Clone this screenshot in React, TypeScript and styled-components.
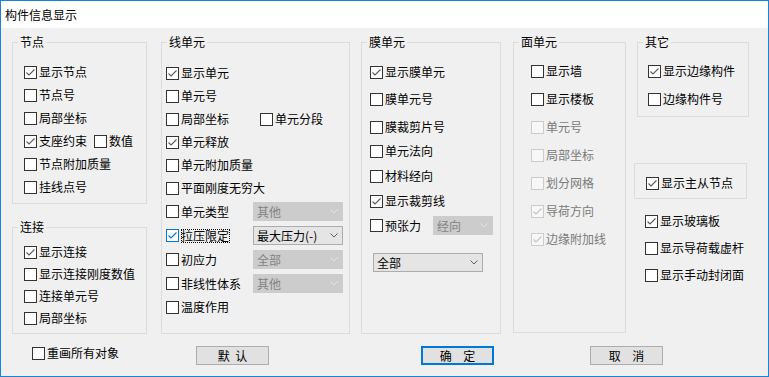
import React from 'react'
import styled, { createGlobalStyle, css } from 'styled-components'

const GlobalStyle = createGlobalStyle`
  html, body {
    margin: 0;
    padding: 0;
    background: #f0f0f0;
  }
  body {
    font-family: 'Noto Sans CJK SC', 'Noto Sans', sans-serif;
    font-size: 12px;
    color: #000;
  }
`

type Tone = 'normal' | 'focus' | 'disabled'

const Window = styled.div`
  box-sizing: border-box;
  width: 769px;
  height: 377px;
  border: 1px solid #1883d7;
  background: #f0f0f0;
  display: flex;
  flex-direction: column;
  overflow: hidden;
`

const TitleBar = styled.div`
  height: 27px;
  flex: none;
  background: #fff;
  display: flex;
  align-items: center;
  padding-left: 4px;
  font-size: 12px;
`

const Body = styled.div`
  display: grid;
  grid-template-columns: 149px 200px 152px 121px 116px;
  grid-template-rows: 292px 19px;
  row-gap: 12px;
  padding: 14px 0 0 11px;
`

const Stack = styled.div<{ $gap?: number }>`
  display: flex;
  flex-direction: column;
  gap: ${(p) => p.$gap ?? 0}px;
`

const Group = styled.div<{ $w: number; $h: number; $pt: number; $pl: number; $gap: number; $ml?: number }>`
  position: relative;
  box-sizing: border-box;
  width: ${(p) => p.$w}px;
  height: ${(p) => p.$h}px;
  margin-left: ${(p) => p.$ml ?? 0}px;
  border: 1px solid #dcdcdc;
  padding: ${(p) => p.$pt}px 0 0 ${(p) => p.$pl}px;
  display: flex;
  flex-direction: column;
  gap: ${(p) => p.$gap}px;
`

const Legend = styled.span`
  position: absolute;
  top: -8px;
  left: 5px;
  padding: 0 2px;
  background: #f0f0f0;
  line-height: 14px;
  white-space: nowrap;
`

const Frame = styled.div`
  box-sizing: border-box;
  width: 113px;
  height: 36px;
  margin-top: 46px;
  border: 1px solid #dcdcdc;
  padding: 11px 0 0 11px;
`

const LooseList = styled.div`
  display: flex;
  flex-direction: column;
  gap: 11px;
  margin-top: 14px;
  padding-left: 11px;
`

const Line = styled.div<{ $h?: number; $mt?: number }>`
  display: flex;
  align-items: center;
  height: ${(p) => p.$h ?? 16}px;
  margin-top: ${(p) => p.$mt ?? 0}px;
  white-space: nowrap;
`

const CheckLabel = styled.label<{ $w?: number }>`
  display: flex;
  align-items: center;
  flex: none;
  ${(p) =>
    p.$w &&
    css`
      width: ${p.$w}px;
    `}
`

const Box = styled.span<{ $tone: Tone }>`
  box-sizing: border-box;
  width: 13px;
  height: 13px;
  flex: none;
  display: flex;
  align-items: center;
  justify-content: center;
  border: 1px solid ${(p) => (p.$tone === 'focus' ? '#0078d7' : p.$tone === 'disabled' ? '#cccccc' : '#333333')};
  background: ${(p) => (p.$tone === 'disabled' ? '#f7f7f7' : '#fff')};
  color: ${(p) => (p.$tone === 'focus' ? '#0078d7' : p.$tone === 'disabled' ? '#c4c4c4' : '#5a5a5a')};
`

const Caption = styled.span<{ $tone: Tone }>`
  margin-left: 2px;
  padding: 0 1px 0 0;
  line-height: 14px;
  color: ${(p) => (p.$tone === 'disabled' ? '#7a7a7a' : '#000')};
  ${(p) =>
    p.$tone === 'focus' &&
    css`
      outline: 1px dotted #000;
      outline-offset: -1px;
    `}
`

const Combo = styled.div<{ $w: number; $disabled?: boolean; $ml?: number }>`
  box-sizing: border-box;
  width: ${(p) => p.$w}px;
  height: 19px;
  flex: none;
  margin-left: ${(p) => p.$ml ?? 0}px;
  padding: 0 4px 0 3px;
  display: flex;
  align-items: center;
  justify-content: space-between;
  border: 1px solid ${(p) => (p.$disabled ? '#cccccc' : '#adadad')};
  background: ${(p) => (p.$disabled ? '#cccccc' : '#e5e5e5')};
  color: ${(p) => (p.$disabled ? '#838383' : '#000')};
  line-height: 14px;
  white-space: nowrap;
`

const Chevron = styled.svg<{ $disabled?: boolean }>`
  flex: none;
  color: ${(p) => (p.$disabled ? '#e2e2e2' : '#606060')};
`

const BottomCell = styled.div<{ $ml: number; $span?: number }>`
  margin-left: ${(p) => p.$ml}px;
  grid-column: span ${(p) => p.$span ?? 1};
  display: flex;
  align-items: flex-start;
`

const Button = styled.button<{ $primary?: boolean; $spacing: number }>`
  box-sizing: border-box;
  width: 73px;
  height: 19px;
  padding: 0;
  margin: 0;
  font-family: inherit;
  font-size: 12px;
  line-height: 14px;
  color: #000;
  background: #e1e1e1;
  border: ${(p) => (p.$primary ? '2px solid #0078d7' : '1px solid #adadad')};
  word-spacing: ${(p) => p.$spacing}px;
  white-space: pre;
`

function Check({
  label,
  checked,
  tone = 'normal',
  width,
}: {
  label: string
  checked?: boolean
  tone?: Tone
  width?: number
}) {
  return (
    <CheckLabel $w={width}>
      <Box $tone={tone}>
        {checked && (
          <svg width='11' height='11' viewBox='0 0 11 11'>
            <path d='M1.5 5.5 L4 8 L9.5 2.5' fill='none' stroke='currentColor' strokeWidth='1.1' />
          </svg>
        )}
      </Box>
      <Caption $tone={tone}>{label}</Caption>
    </CheckLabel>
  )
}

function Select({ value, width, disabled, ml }: { value: string; width: number; disabled?: boolean; ml?: number }) {
  return (
    <Combo $w={width} $disabled={disabled} $ml={ml}>
      <span>{value}</span>
      <Chevron $disabled={disabled} width='8' height='5' viewBox='0 0 8 5'>
        <polyline points='0.5,0.5 4,4 7.5,0.5' fill='none' stroke='currentColor' strokeWidth='1' />
      </Chevron>
    </Combo>
  )
}

export default function App() {
  return (
    <>
      <GlobalStyle />
      <Window>
        <TitleBar>构件信息显示</TitleBar>
        <Body>
          <Stack $gap={23}>
            <Group $w={135} $h={162} $pt={21} $pl={11} $gap={7}>
              <Legend>节点</Legend>
              <Line><Check label='显示节点' checked /></Line>
              <Line><Check label='节点号' /></Line>
              <Line><Check label='局部坐标' /></Line>
              <Line>
                <Check label='支座约束' checked width={70} />
                <Check label='数值' />
              </Line>
              <Line><Check label='节点附加质量' /></Line>
              <Line><Check label='挂线点号' /></Line>
            </Group>
            <Group $w={135} $h={107} $pt={16} $pl={11} $gap={6}>
              <Legend>连接</Legend>
              <Line><Check label='显示连接' checked /></Line>
              <Line><Check label='显示连接刚度数值' /></Line>
              <Line><Check label='连接单元号' /></Line>
              <Line><Check label='局部坐标' /></Line>
            </Group>
          </Stack>

          <Group $w={189} $h={292} $pt={22} $pl={4} $gap={7}>
            <Legend>线单元</Legend>
            <Line><Check label='显示单元' checked /></Line>
            <Line><Check label='单元号' /></Line>
            <Line>
              <Check label='局部坐标' width={94} />
              <Check label='单元分段' />
            </Line>
            <Line><Check label='单元释放' checked /></Line>
            <Line><Check label='单元附加质量' /></Line>
            <Line><Check label='平面刚度无穷大' /></Line>
            <Line $h={17}>
              <Check label='单元类型' width={87} />
              <Select value='其他' width={90} disabled />
            </Line>
            <Line $h={17}>
              <Check label='拉压限定' checked tone='focus' width={87} />
              <Select value='最大压力(-)' width={90} />
            </Line>
            <Line $h={17}>
              <Check label='初应力' width={87} />
              <Select value='全部' width={90} disabled />
            </Line>
            <Line $h={17}>
              <Check label='非线性体系' width={87} />
              <Select value='其他' width={90} disabled />
            </Line>
            <Line><Check label='温度作用' /></Line>
          </Group>

          <Group $w={140} $h={292} $pt={21} $pl={8} $gap={8}>
            <Legend>膜单元</Legend>
            <Line><Check label='显示膜单元' checked /></Line>
            <Line $mt={3}><Check label='膜单元号' /></Line>
            <Line $mt={4}><Check label='膜裁剪片号' /></Line>
            <Line><Check label='单元法向' /></Line>
            <Line $mt={1}><Check label='材料经向' /></Line>
            <Line $mt={1}><Check label='显示裁剪线' checked /></Line>
            <Line $h={17}>
              <Check label='预张力' width={63} />
              <Select value='经向' width={60} disabled />
            </Line>
            <Line $h={19} $mt={11}>
              <Select value='全部' width={110} ml={3} />
            </Line>
          </Group>

          <Group $w={113} $h={291} $pt={20} $pl={17} $gap={12}>
            <Legend>面单元</Legend>
            <Line><Check label='显示墙' /></Line>
            <Line><Check label='显示楼板' /></Line>
            <Line><Check label='单元号' tone='disabled' /></Line>
            <Line><Check label='局部坐标' tone='disabled' /></Line>
            <Line><Check label='划分网格' tone='disabled' /></Line>
            <Line><Check label='导荷方向' checked tone='disabled' /></Line>
            <Line><Check label='边缘附加线' checked tone='disabled' /></Line>
          </Group>

          <Stack>
            <Group $w={112} $h={75} $pt={20} $pl={10} $gap={12} $ml={3}>
              <Legend>其它</Legend>
              <Line><Check label='显示边缘构件' checked /></Line>
              <Line><Check label='边缘构件号' /></Line>
            </Group>
            <Frame>
              <Line><Check label='显示主从节点' checked /></Line>
            </Frame>
            <LooseList>
              <Line><Check label='显示玻璃板' checked /></Line>
              <Line><Check label='显示导荷载虚杆' /></Line>
              <Line><Check label='显示手动封闭面' /></Line>
            </LooseList>
          </Stack>

          <BottomCell $ml={20}>
            <Line $mt={-1}><Check label='重画所有对象' /></Line>
          </BottomCell>
          <BottomCell $ml={35}>
            <Button $spacing={3}>默 认</Button>
          </BottomCell>
          <BottomCell $ml={60}>
            <Button $primary $spacing={9}>确 定</Button>
          </BottomCell>
          <BottomCell $ml={77} $span={2}>
            <Button $spacing={9}>取 消</Button>
          </BottomCell>
        </Body>
      </Window>
    </>
  )
}
